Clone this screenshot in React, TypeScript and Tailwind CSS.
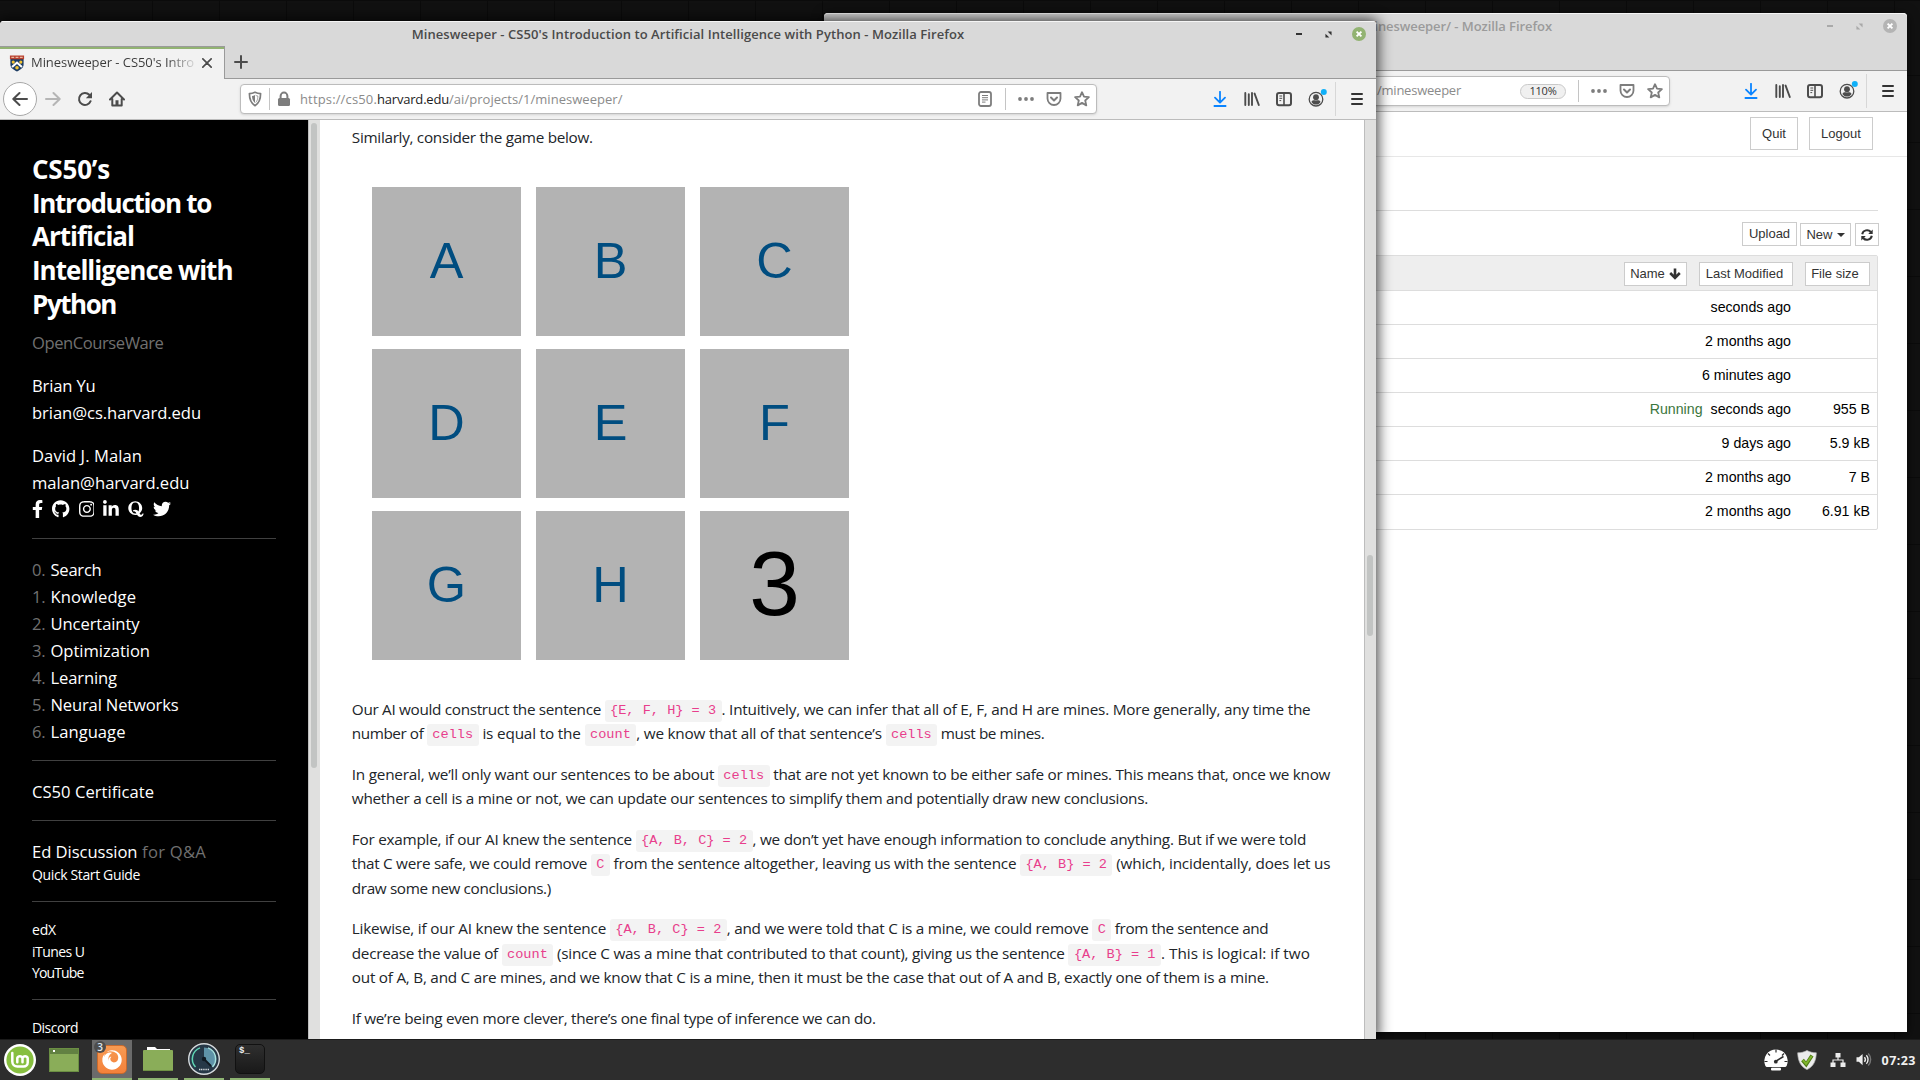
import React, { useLayoutEffect, useRef } from "react";
import {
  FaFacebookF,
  FaGithub,
  FaInstagram,
  FaLinkedinIn,
  FaQuora,
  FaTwitter,
  FaFirefox,
} from "react-icons/fa";

/* Text run justified to an exact width by spreading the difference between its letters. */
function Fit({ w, children, className = "" }: { w: number; children: string; className?: string }) {
  const ref = useRef<HTMLSpanElement>(null);
  useLayoutEffect(() => {
    const el = ref.current;
    if (!el) return;
    el.style.letterSpacing = "0px";
    const natural = el.getBoundingClientRect().width;
    el.style.letterSpacing = `${(w - natural) / children.length}px`;
  }, [w, children]);
  return (
    <span ref={ref} className={`inline-block whitespace-pre ${className}`}>
      {children}
    </span>
  );
}

function Code({ children }: { children: string }) {
  return (
    <code className="inline-block h-[22px] whitespace-pre rounded-[3px] bg-[#f3f3f3] px-[5.44px] font-['Liberation_Mono',monospace] text-[13.6px] leading-[22px] text-[#e83e8c]">
      {children}
    </code>
  );
}

type Part = [string, number] | string;

function Paragraph({ lines }: { lines: Part[][] }) {
  return (
    <div className="mb-4">
      {lines.map((line, i) => (
        <div key={i} className="flex h-[24.5px] items-center whitespace-pre leading-[24.5px]">
          {line.map((p, j) =>
            typeof p === "string" ? (
              <span key={j} className="pt-[3px] leading-none">
                <Code>{p}</Code>
              </span>
            ) : (
              <Fit key={j} w={p[1]}>
                {p[0]}
              </Fit>
            ),
          )}
        </div>
      ))}
    </div>
  );
}

const PARAGRAPHS: Part[][][] = [
  [
    [
      ["Our AI would construct the sentence ", 252.8],
      "{E, F, H} = 3",
      [". Intuitively, we can infer that all of E, F, and H are mines. More generally, any time the", 588.9],
    ],
    [
      ["number of ", 75.1],
      "cells",
      [" is equal to the ", 106],
      "count",
      [", we know that all of that sentence’s ", 249.3],
      "cells",
      [" must be mines.", 107.1],
    ],
  ],
  [
    [
      ["In general, we’ll only want our sentences to be about ", 366.1],
      "cells",
      [" that are not yet known to be either safe or mines. This means that, once we know", 560.6],
    ],
    [
      [
        "whether a cell is a mine or not, we can update our sentences to simplify them and potentially draw new conclusions.",
        796.2,
      ],
    ],
  ],
  [
    [
      ["For example, if our AI knew the sentence ", 283.8],
      "{A, B, C} = 2",
      [", we don’t yet have enough information to conclude anything. But if we were told", 553.5],
    ],
    [
      ["that C were safe, we could remove ", 239],
      "C",
      [" from the sentence altogether, leaving us with the sentence ", 410.1],
      "{A, B} = 2",
      [" (which, incidentally, does let us", 218],
    ],
    [["draw some new conclusions.)", 199.1]],
  ],
  [
    [
      ["Likewise, if our AI knew the sentence ", 258],
      "{A, B, C} = 2",
      [", and we were told that C is a mine, we could remove ", 365.5],
      "C",
      [" from the sentence and", 157],
    ],
    [
      ["decrease the value of ", 149.8],
      "count",
      [" (since C was a mine that contributed to that count), giving us the sentence ", 515.2],
      "{A, B} = 1",
      [". This is logical: if two", 149],
    ],
    [
      [
        "out of A, B, and C are mines, and we know that C is a mine, then it must be the case that out of A and B, exactly one of them is a mine.",
        917,
      ],
    ],
  ],
  [[["If we’re being even more clever, there’s one final type of inference we can do.", 523.9]]],
];

/* ---------- toolbar icons ---------- */

const box = "h-4 w-4 shrink-0";

const DownloadIcon = () => (
  <svg viewBox="0 0 16 16" className="h-4 w-4 text-[#0a84ff]" fill="none" stroke="currentColor" strokeWidth="1.8" strokeLinecap="round" strokeLinejoin="round">
    <path d="M8 .8v10M3 6.6l5 5 5-5M2.4 15h11.2" />
  </svg>
);
const LibraryIcon = () => (
  <svg viewBox="0 0 16 16" className={box} fill="none" stroke="currentColor" strokeWidth="1.9" strokeLinecap="round">
    <path d="M1.3 2v12M4.8 3.2V14M8 2v12M10.6 2.6l4.2 11.4" />
  </svg>
);
const SidebarIcon = () => (
  <svg viewBox="0 0 16 16" className={box} fill="none" stroke="currentColor">
    <rect x="1" y="2" width="14" height="12.2" rx="2" strokeWidth="2" />
    <path d="M8 2v12" strokeWidth="1.6" />
    <path d="M3.4 5h2.8M3.4 7.3h2.8M3.4 9.6h1.8" strokeWidth="1" />
  </svg>
);
const AccountIcon = () => (
  <svg viewBox="0 0 20 20" className="h-5 w-5 overflow-visible">
    <circle cx="10" cy="10.2" r="6.800" fill="none" stroke="currentColor" strokeWidth="1.3" />
    <circle cx="10" cy="8.2" r="2.9" fill="currentColor" />
    <path d="M5.400 13c1-2 2.600-1.600 4.600-1.600s3.600-.400 4.600 1.600a5.400 5.400 0 0 1-9.200 0z" fill="currentColor" />
    <circle cx="17.800" cy="3" r="3" fill="#10b0f8" />
  </svg>
);
const MenuIcon = () => (
  <svg viewBox="0 0 16 16" className={box} stroke="currentColor" strokeWidth="2" strokeLinecap="round">
    <path d="M3 3h10M3 8h10M3 13h10" />
  </svg>
);
const StarIcon = () => (
  <svg viewBox="0 0 16 16" className={box} fill="none" stroke="currentColor" strokeWidth="1.8" strokeLinejoin="round">
    <path d="M8 1.200l2 4.500 4.900.500-3.700 3.300 1.100 4.900L8 11.900l-4.300 2.500 1.100-4.900L1.100 6.200 6 5.700z" />
  </svg>
);
const PocketIcon = () => (
  <svg viewBox="0 0 16 16" className={box} fill="none" stroke="currentColor" strokeWidth="1.8" strokeLinecap="round" strokeLinejoin="round">
    <path d="M1.500 2h13v5.500a6.500 6.500 0 0 1-13 0z" />
    <path d="M5 6.500l3 3 3-3" strokeWidth="2" />
  </svg>
);
const DotsIcon = () => (
  <svg viewBox="0 0 16 16" className={box} fill="currentColor">
    <circle cx="2" cy="8" r="1.900" />
    <circle cx="8" cy="8" r="1.900" />
    <circle cx="14" cy="8" r="1.900" />
  </svg>
);
const ReaderIcon = () => (
  <svg viewBox="0 0 16 16" className={box} fill="none" stroke="currentColor">
    <rect x="2" y="1" width="12" height="14" rx="2" strokeWidth="1.800" />
    <path d="M5 4.500h6M5 6.700h6M5 8.900h6M5 11.100h3.500" strokeWidth="1" />
  </svg>
);
const ShieldIcon = () => (
  <svg viewBox="0 0 16 16" className={box}>
    <path d="M8 1.300c2 1 3.800 1.300 5.600 1.300 0 5.600-1 9.400-5.600 12.100C3.400 12 2.400 8.200 2.400 2.600 4.200 2.600 6 2.300 8 1.300z" fill="none" stroke="currentColor" strokeWidth="1.700" strokeLinejoin="round" />
    <path d="M8 4v8C6 10.300 5 8 5 5c1 0 2-.300 3-1z" fill="currentColor" />
    <path d="M8.600 4.200c.7.500 1.500.8 2.300.8 0 3-.700 5-2.300 6.600" fill="none" stroke="currentColor" strokeWidth=".7" />
  </svg>
);
const LockIcon = () => (
  <svg viewBox="0 0 16 16" className={box}>
    <rect x="2" y="7" width="12" height="8" rx="1.500" fill="currentColor" />
    <path d="M4.600 7.500V5a3.400 3.400 0 0 1 6.800 0v2.500" fill="none" stroke="currentColor" strokeWidth="2" />
  </svg>
);
const BackIcon = () => (
  <svg viewBox="0 0 16 16" className={box} fill="none" stroke="currentColor" strokeWidth="2" strokeLinecap="round" strokeLinejoin="round">
    <path d="M15 8H1.500M7.500 2L1.300 8l6.200 6" />
  </svg>
);
const ForwardIcon = () => (
  <svg viewBox="0 0 16 16" className={box} fill="none" stroke="currentColor" strokeWidth="2" strokeLinecap="round" strokeLinejoin="round">
    <path d="M1 8h13.500M8.500 2l6.200 6-6.200 6" />
  </svg>
);
const ReloadIcon = () => (
  <svg viewBox="0 0 16 16" className={box} fill="none" stroke="currentColor" strokeWidth="2" strokeLinecap="round">
    <path d="M13.600 10.200A6 6 0 1 1 12.300 3.800" />
    <path d="M15 1v6.200H8.800z" fill="currentColor" stroke="none" />
  </svg>
);
const HomeIcon = () => (
  <svg viewBox="0 0 16 16" className={box} fill="none" stroke="currentColor" strokeWidth="2" strokeLinecap="round" strokeLinejoin="round">
    <path d="M1 8.500L8 1.500l7 7M3.300 8v6.500h9.400V8" />
    <path d="M8 14V9.200" strokeWidth="3" strokeLinecap="butt" />
  </svg>
);

/* ---------- window chrome ---------- */

function WindowButtons({ active }: { active: boolean }) {
  return (
    <div className={`flex h-[24px] items-center pr-[10px] ${active ? "text-[#333]" : "text-[#a9a9a9]"}`}>
      <span className="mr-[19px] flex w-[14px] justify-center">
        <span className="h-[2px] w-[6px] bg-current" />
      </span>
      <svg viewBox="0 0 8 8" className="mr-[20px] h-[7px] w-[7px]" fill="currentColor">
        <path d="M3 .5h4.500V5zM.5 3L5 7.500H.5z" />
      </svg>
      <svg viewBox="0 0 14 14" className="h-[14px] w-[14px]">
        <circle cx="7" cy="7" r="7" fill={active ? "#92b372" : "#b4b4b4"} />
        <path d="M4.600 4.600l4.800 4.800M9.400 4.600L4.600 9.400" stroke="#fff" strokeWidth="1.900" />
      </svg>
    </div>
  );
}

function UrlActions({ reader }: { reader?: boolean }) {
  return (
    <div className="flex h-full items-center text-[#7d7d7d]">
      {reader && (
        <span className="mr-[12px]">
          <ReaderIcon />
        </span>
      )}
      <span className="mr-[6px] h-[22px] w-px bg-[#c4c4c4]" />
      <span className="flex w-7 justify-center">
        <DotsIcon />
      </span>
      <span className="flex w-7 justify-center">
        <PocketIcon />
      </span>
      <span className="flex w-7 justify-center">
        <StarIcon />
      </span>
    </div>
  );
}

function ToolbarEnd() {
  return (
    <div className="flex items-center text-[#4c4c4c]">
      <span className="flex w-8 justify-center">
        <DownloadIcon />
      </span>
      <span className="flex w-8 justify-center">
        <LibraryIcon />
      </span>
      <span className="flex w-8 justify-center">
        <SidebarIcon />
      </span>
      <span className="flex w-8 justify-center">
        <AccountIcon />
      </span>
      <span className="ml-[3px] h-[34px] w-px bg-[#d7d7d7]" />
      <span className="ml-[2px] flex w-[38px] justify-center text-[#333]">
        <MenuIcon />
      </span>
    </div>
  );
}

const btn =
  "flex items-center justify-center border border-[#ccc] bg-white text-[#333] whitespace-nowrap";

const FILES: [string, string, boolean][] = [
  ["seconds ago", "", false],
  ["2 months ago", "", false],
  ["6 minutes ago", "", false],
  ["seconds ago", "955 B", true],
  ["9 days ago", "5.9 kB", false],
  ["2 months ago", "7 B", false],
  ["2 months ago", "6.91 kB", false],
];

function JupyterWindow() {
  return (
    <div className="absolute left-[824px] top-[13px] flex h-[1019px] w-[1083px] flex-col rounded-t-[4px] bg-white shadow-[0_2px_12px_rgba(0,0,0,0.7)]">
      <div className="flex h-[57px] shrink-0 items-start justify-end rounded-t-[4px] border-t border-[#f5f5f5] bg-[#d9d9d9]">
        <div className="flex h-[26px] items-center pr-[271px] font-['Open_Sans',sans-serif] text-[13px] font-semibold text-[#9b9b9b]">
          <Fit w={190}>minesweeper/ - Mozilla Firefox</Fit>
        </div>
        <WindowButtons active={false} />
      </div>
      <div className="flex h-[42px] shrink-0 items-center justify-end border-y border-b-[#bcbcbc] border-t-[#9a9a9a] bg-[#f2f2f2]">
        <div className="mr-[65px] flex h-[30px] w-[500px] items-center justify-end rounded-[4px] border border-[#bcbcbc] bg-white shadow-sm">
          <span className="mr-[59px] font-['Open_Sans',sans-serif] text-[13px] text-[#8b8b8b]">
            <Fit w={84}>/minesweeper</Fit>
          </span>
          <span className="mr-[12px] flex h-[15px] w-[46px] items-center justify-center rounded-full border border-[#c9c9c9] bg-[#f0f0f0] font-['Open_Sans',sans-serif] text-[11px] text-[#333]">
            <Fit w={27}>110%</Fit>
          </span>
          <UrlActions />
        </div>
        <ToolbarEnd />
      </div>
      <div className="flex min-h-0 flex-1 flex-col font-['Liberation_Sans',Arial,sans-serif] text-[13px]">
        <div className="flex h-[45px] shrink-0 items-start justify-end border-b border-[#e7e7e7] pr-[34px] pt-[5px]">
          <div className={`${btn} mr-[11px] h-[33px] w-[48px]`}>Quit</div>
          <div className={`${btn} h-[33px] w-[64px]`}>Logout</div>
        </div>
        <div className="mr-[29px] h-[54px] shrink-0 border-b border-[#ddd]" />
        <div className="mr-[28px] mt-[11px] flex h-[24px] shrink-0 items-end justify-end">
          <div className={`${btn} mr-[3px] h-[24px] w-[55px]`}>Upload</div>
          <div className={`${btn} mr-[4px] h-[23px] w-[51px]`}>
            New
            <span className="ml-[4px] border-x-4 border-t-4 border-x-transparent border-t-[#333]" />
          </div>
          <div className={`${btn} h-[23px] w-[24px]`}>
            <svg viewBox="0 0 12 12" className="h-3 w-3" fill="none" stroke="#333" strokeWidth="2">
              <path d="M1.200 5.200A4.900 4.900 0 0 1 9.800 3M10.800 6.800A4.900 4.900 0 0 1 2.200 9" />
              <path d="M11.700.5v4.600H7.200zM.3 11.500V6.900h4.500z" fill="#333" stroke="none" />
            </svg>
          </div>
        </div>
        <div className="mr-[29px] mt-[9px] shrink-0 rounded-[2px] border border-[#ddd]">
          <div className="flex h-[35px] items-center justify-end border-b border-[#ddd] bg-[#eee] pr-[7px] pt-[2px]">
            <div className={`${btn} mr-[12px] h-[24px] w-[63px] gap-[4px]`}>
              Name
              <svg viewBox="0 0 12 12" className="h-3 w-3" fill="none" stroke="#333" strokeWidth="2.600">
                <path d="M6 .5v9M1.200 5L6 9.800 10.800 5" />
              </svg>
            </div>
            <div className={`${btn} mr-[12px] h-[24px] w-[94px] pr-[3px]`}>Last Modified</div>
            <div className={`${btn} h-[24px] w-[65px] pr-[5px]`}>File size</div>
          </div>
          {FILES.map(([time, size, running], i) => (
            <div
              key={i}
              className="flex h-[34px] items-center justify-end border-b border-[#ddd] pr-[7px] text-[14.200px] text-black last:border-b-0"
            >
              {running && <span className="mr-[8px] text-[#3c763d]">Running</span>}
              <span className={running ? "pt-[1px]" : ""}>{time}</span>
              <span className={`w-[79px] text-right ${running ? "pt-[1px]" : ""}`}>{size}</span>
            </div>
          ))}
        </div>
      </div>
    </div>
  );
}

/* ---------- course sidebar ---------- */

const Rule = ({ className }: { className: string }) => (
  <div className={`h-px w-[244px] shrink-0 bg-[#404040] ${className}`} />
);

const HEADING: [string, number][] = [
  ["CS50’s", 78],
  ["Introduction to", 179],
  ["Artificial", 102],
  ["Intelligence with", 200.5],
  ["Python", 84],
];

const LECTURES: [string, number][] = [
  ["Search", 51],
  ["Knowledge", 85.5],
  ["Uncertainty", 89],
  ["Optimization", 99.5],
  ["Learning", 66.5],
  ["Neural Networks", 128],
  ["Language", 75],
];

function CourseSidebar() {
  return (
    <div className="flex w-[308px] shrink-0 flex-col overflow-hidden bg-black pl-[32px] pt-[33px] text-[16.600px] leading-[27px] text-white [font-stretch:97%]">
      <div className="shrink-0 text-[26px] font-bold leading-[33.700px] [font-stretch:90%]">
        {HEADING.map(([t, w]) => (
          <div key={t}>
            <Fit w={w}>{t}</Fit>
          </div>
        ))}
      </div>
      <div className="mt-[7px] h-[27px] shrink-0 text-[#707070]">
        <Fit w={131.500}>OpenCourseWare</Fit>
      </div>
      <div className="mt-[16px] h-[27px] shrink-0">
        <Fit w={63.500}>Brian Yu</Fit>
      </div>
      <div className="h-[27px] shrink-0">
        <Fit w={169}>brian@cs.harvard.edu</Fit>
      </div>
      <div className="mt-[16px] h-[27px] shrink-0">
        <Fit w={110}>David J. Malan</Fit>
      </div>
      <div className="h-[27px] shrink-0">
        <Fit w={157.500}>malan@harvard.edu</Fit>
      </div>
      <div className="flex h-[26px] shrink-0 items-center gap-[9px]">
        <FaFacebookF className="h-[18px] w-[11.200px]" />
        <FaGithub className="h-[18px] w-[17.400px]" />
        <FaInstagram className="h-[18px] w-[15.800px]" />
        <FaLinkedinIn className="h-[18px] w-[15.800px]" />
        <FaQuora className="h-[18px] w-[15.800px]" />
        <FaTwitter className="h-[18px] w-[18px]" />
      </div>
      <Rule className="mb-[17px] mt-[16px]" />
      <div className="shrink-0">
        {LECTURES.map(([t, w], i) => (
          <div key={t} className="flex h-[27px]">
            <span className="w-[18.500px] text-[#707070]">
              <Fit w={13.500}>{`${i}.`}</Fit>
            </span>
            <Fit w={w}>{t}</Fit>
          </div>
        ))}
      </div>
      <Rule className="mb-[17px] mt-[15px]" />
      <div className="h-[27px] shrink-0">
        <Fit w={122}>CS50 Certificate</Fit>
      </div>
      <Rule className="mb-[17px] mt-[15px]" />
      <div className="h-[26px] shrink-0">
        <Fit w={105.500}>Ed Discussion</Fit>
        <Fit w={68.500} className="text-[#707070]">
          {" for Q&A"}
        </Fit>
      </div>
      <div className="shrink-0 text-[14px] leading-[21.500px] [font-stretch:93%]">
        <Fit w={108}>Quick Start Guide</Fit>
      </div>
      <Rule className="mb-[17px] mt-[16px]" />
      <div className="flex shrink-0 flex-col items-start text-[14px] leading-[21.500px] [font-stretch:93%]">
        <Fit w={24}>edX</Fit>
        <Fit w={52.500}>iTunes U</Fit>
        <Fit w={51.500}>YouTube</Fit>
      </div>
      <Rule className="mb-[17px] mt-[15px]" />
      <div className="shrink-0 text-[14px] leading-[21.500px] [font-stretch:93%]">
        <Fit w={46}>Discord</Fit>
      </div>
    </div>
  );
}

function Crest() {
  return (
    <svg viewBox="0 0 16 18" className="h-[17px] w-[16px]">
      <path d="M1 1h14v9c0 4-4 5.500-7 7.500C5 15.500 1 14 1 10z" fill="#1d3c63" />
      <path d="M.5.500h15v4H.5z" fill="#b8402f" />
      <path d="M2 2.500h3M6.500 2.500h3M11 2.500h3" stroke="#e8b8a0" strokeWidth="1.200" />
      <path d="M2 12l6-5.500 6 5.500-1.500 1.500L8 9.500l-4.500 4z" fill="#fff" />
      <circle cx="4" cy="7.500" r="1.700" fill="#f2c230" />
      <circle cx="12" cy="7.500" r="1.700" fill="#f2c230" />
      <circle cx="8" cy="13.500" r="1.900" fill="#f2c230" />
    </svg>
  );
}

const CELLS = ["A", "B", "C", "D", "E", "F", "G", "H", "3"];

function CourseWindow() {
  return (
    <div className="absolute left-0 top-[21px] h-[1018px] w-[1376px] rounded-tr-[4px] shadow-[0_0_14px_2px_rgba(0,0,0,0.750)]">
      <div className="flex h-full w-full flex-col overflow-hidden rounded-t-[4px] bg-white font-['Open_Sans',sans-serif]">
        <div className="grid h-[25px] shrink-0 grid-cols-[1fr_auto_1fr] items-start border-t border-[#f5f5f5] bg-[#d9d9d9]">
          <span />
          <span className="text-[13px] font-semibold leading-[25px] text-[#4a4a4a]">
            <Fit w={552.500}>Minesweeper - CS50's Introduction to Artificial Intelligence with Python - Mozilla Firefox</Fit>
          </span>
          <div className="flex justify-end">
            <WindowButtons active />
          </div>
        </div>
        <div className="flex h-[33px] shrink-0 bg-[#d9d9d9]">
          <div className="flex h-full w-[225px] items-center border-r border-t border-[#9a9a9a] bg-[#f2f2f2] shadow-[inset_0_2px_0_#92b372]">
            <span className="ml-[9px] mr-[6px]">
              <Crest />
            </span>
            <span className="w-[165px] overflow-hidden whitespace-nowrap bg-[linear-gradient(90deg,#3a3a3a_82%,transparent_102%)] bg-clip-text text-[13px] text-transparent">
              <Fit w={163}>Minesweeper - CS50's Intro</Fit>
            </span>
            <svg viewBox="0 0 12 12" className="ml-[6px] h-[10px] w-[10px]" stroke="#4c4c4c" strokeWidth="2" strokeLinecap="round">
              <path d="M1 1l10 10M11 1L1 11" />
            </svg>
          </div>
          <div className="flex flex-1 items-center border-b border-[#9a9a9a] pl-[9px]">
            <svg viewBox="0 0 14 14" className="h-[14px] w-[14px]" stroke="#4c4c4c" strokeWidth="2" strokeLinecap="round">
              <path d="M7 1v12M1 7h12" />
            </svg>
          </div>
        </div>
        <div className="flex h-[41px] shrink-0 items-center border-b border-[#bcbcbc] bg-[#f2f2f2] text-[#4c4c4c]">
          <span className="ml-[3px] flex h-[34px] w-[34px] items-center justify-center rounded-full border border-[#a8a8a8] bg-white">
            <BackIcon />
          </span>
          <span className="ml-[8px] text-[#b5b5b5]">
            <ForwardIcon />
          </span>
          <span className="ml-[16px]">
            <ReloadIcon />
          </span>
          <span className="ml-[16px]">
            <HomeIcon />
          </span>
          <div className="ml-[115px] flex h-[30px] w-[857px] items-center rounded-[4px] border border-[#bcbcbc] bg-white shadow-sm">
            <span className="ml-[6px] text-[#7d7d7d]">
              <ShieldIcon />
            </span>
            <span className="ml-[6px] h-[22px] w-px bg-[#c4c4c4]" />
            <span className="ml-[6px] text-[#7d7d7d]">
              <LockIcon />
            </span>
            <span className="ml-[8px] flex flex-1 whitespace-nowrap pt-[1px] text-[13px] text-[#8b8b8b]">
              <Fit w={77}>https://cs50.</Fit>
              <Fit w={72} className="text-[#1c1c1c]">
                harvard.edu
              </Fit>
              <Fit w={173.500}>/ai/projects/1/minesweeper/</Fit>
            </span>
            <UrlActions reader />
          </div>
          <div className="ml-auto">
            <ToolbarEnd />
          </div>
        </div>
        <div className="flex min-h-0 flex-1">
          <CourseSidebar />
          <div className="w-[12px] shrink-0 border-l border-[#bdbdbd] bg-[#e0e0df] pl-[2px] pt-[3px]">
            <div className="h-[645px] w-[6px] rounded-full bg-[#c2c4c3]" />
          </div>
          <div className="min-w-0 flex-1 overflow-hidden pl-[31.800px] pt-[4.800px] text-[15.300px] leading-[24.500px] text-[#212529] [font-stretch:97%]">
            <div className="h-[24.500px]">
              <Fit w={241}>Similarly, consider the game below.</Fit>
            </div>
            <div className="ml-[20.200px] mt-[37.700px] grid grid-cols-[149px_149px_149px] gap-x-[15px] gap-y-[13px]">
              {CELLS.map((c) => (
                <div
                  key={c}
                  className={`h-[149px] bg-[#b3b3b3] text-center font-['Liberation_Sans',Arial,sans-serif] ${
                    c === "3" ? "text-[91px] leading-[146px] text-black" : "text-[50.500px] leading-[147px] text-[#004d80]"
                  }`}
                >
                  {c}
                </div>
              ))}
            </div>
            <div className="pt-[37px]">
              {PARAGRAPHS.map((lines, i) => (
                <Paragraph key={i} lines={lines} />
              ))}
            </div>
          </div>
          <div className="w-[12px] shrink-0 border-l border-[#bdbdbd] bg-[#e0e0df] pl-[2px] pt-[435px]">
            <div className="h-[81px] w-[6px] rounded-full bg-[#c2c4c3]" />
          </div>
        </div>
      </div>
    </div>
  );
}

/* ---------- panel ---------- */

function Slot({ children, running, active }: { children: React.ReactNode; running?: boolean; active?: boolean }) {
  return (
    <div
      className={`relative mr-[6px] flex h-[40px] w-[40px] shrink-0 items-center justify-center pb-[2px] ${
        active ? "bg-[#6b6b6b]" : ""
      } ${running ? "shadow-[inset_0_-2px_0_#8fb573]" : ""}`}
    >
      {children}
    </div>
  );
}

function Panel() {
  return (
    <div className="absolute bottom-0 left-0 flex h-[41px] w-full items-start border-t border-[#1b1b1b] bg-[#2d2d2d]">
      <Slot>
        <svg viewBox="0 0 32 32" className="mt-[2px] h-8 w-8">
          <circle cx="16" cy="16" r="16" fill="#fff" />
          <circle cx="16" cy="16" r="13.600" fill="#87bf40" />
          <path
            d="M8.300 9v8.500a5 5 0 0 0 5 5h6.400a4 4 0 0 0 4-4v-4.300a2.700 2.700 0 0 0-5.200 0v4M18.500 18.200v-4a2.700 2.700 0 0 0-5.200 0v4"
            fill="none"
            stroke="#fff"
            strokeWidth="2.500"
            strokeLinecap="round"
          />
        </svg>
      </Slot>
      <Slot>
        <div className="ml-[-4px] mt-[2px] h-[24px] w-[30px] border border-[#6b8f43] bg-[#8aad59]">
          <div className="h-[5px] bg-[#628142] pl-[3px] pt-[1px]">
            <div className="h-[2px] w-[2px] bg-white" />
          </div>
        </div>
      </Slot>
      <Slot running active>
        <div className="mt-[1px] flex h-[29px] w-[30px] items-center justify-center rounded-[5px] border border-[#c96a2c] bg-linear-to-b from-[#f79a52] to-[#f4813a]">
          <FaFirefox className="h-[20px] w-[20px] text-white" />
        </div>
        <span className="absolute left-[2px] top-[1px] flex h-[12px] w-[12px] items-center justify-center rounded-full bg-[#4d4d4d] font-['Open_Sans',sans-serif] text-[10px] font-semibold text-[#dfe8f0]">
          3
        </span>
      </Slot>
      <Slot running>
        <svg viewBox="0 0 30 26" className="h-[26px] w-[30px]">
          <path d="M4 1h8l2 2h13v6H4z" fill="#fff" />
          <rect x="0" y="4" width="30" height="21" rx="1" fill="#8aad59" />
          <path d="M.5 24.500h29" stroke="#6f9244" />
        </svg>
      </Slot>
      <Slot running>
        <svg viewBox="0 0 32 32" className="h-8 w-8">
          <circle cx="16" cy="16" r="15.300" fill="#263847" stroke="#d5dadd" strokeWidth="1.400" />
          <path d="M16 16V4.500A11.500 11.500 0 0 1 24.500 23.500z" fill="#5f93a8" />
          <path d="M7.500 24A11.800 11.800 0 0 1 12 4.900" fill="none" stroke="#5fd6b4" strokeWidth="1.500" />
          <path d="M20 4.900A11.800 11.800 0 0 1 24.500 24" fill="none" stroke="#a8e3e0" strokeWidth="1.500" />
          <path d="M16 16l7 7" stroke="#101a22" strokeWidth="1.800" />
          <circle cx="16" cy="16" r="2.200" fill="#101a22" />
          <path d="M11 26.500h10" stroke="#d5dadd" strokeWidth="1.600" strokeDasharray="1.200 .6" />
        </svg>
      </Slot>
      <Slot running>
        <div className="h-[30px] w-[30px] rounded-[5px] border border-[#111] bg-linear-to-b from-[#2f2f2f] to-[#191919] pl-[3px] pt-[1px] font-['Liberation_Mono',monospace] text-[9px] font-bold leading-[11px] text-[#eee]">
          $_
        </div>
      </Slot>
      <div className="ml-auto flex h-[40px] items-center pr-[4px]">
        <svg viewBox="0 0 24 22" className="mr-[9px] h-[22px] w-[24px]">
          <path d="M12 .5A11.600 11.600 0 0 0 1.200 16.500c.5 1 1.300 1.500 2.300 1.500h17c1 0 1.800-.5 2.300-1.500A11.600 11.600 0 0 0 12 .5z" fill="#fff" />
          <path d="M12 .5v3M4 4.500l2 2M20 4.500l-2 2M.5 12.500h3M23.500 12.500h-3" stroke="#2d2d2d" strokeWidth="1.200" />
          <path d="M11.500 12.500l8-5" stroke="#2d2d2d" strokeWidth="1.500" />
          <circle cx="11.800" cy="12.700" r="1.900" fill="#2d2d2d" />
          <rect x="7" y="18.800" width="10" height="2.600" rx="1" fill="#fff" />
        </svg>
        <svg viewBox="0 0 20 20" className="mr-[13px] h-[20px] w-[20px]">
          <path d="M10 .5c3 1.700 6 2.300 9.300 2.300C19 11 16.500 16.500 10 19.600 3.500 16.500 1 11 .7 2.800 4 2.800 7 2.200 10 .5z" fill="#ececec" stroke="#bbb" strokeWidth=".7" />
          <path d="M5.500 10l3.700 4.500L15 5.500" fill="none" stroke="#4f7a17" strokeWidth="3.600" />
          <path d="M5.800 10.200l3.300 3.800 5.600-8" fill="none" stroke="#7fb52d" strokeWidth="2" />
        </svg>
        <svg viewBox="0 0 16 16" className="mr-[10px] h-4 w-4" fill="#ececec">
          <path d="M5.500 1h5v4.500h-5zM.5 10.500h5V15h-5zM10.500 10.500h5V15h-5z" />
          <path d="M8 5v3M3 11V8h10v3" fill="none" stroke="#ececec" strokeWidth="1.200" />
        </svg>
        <svg viewBox="0 0 16 16" className="mr-[10px] h-4 w-4 pb-[1px]" fill="none" strokeWidth="1.500">
          <path d="M0 5.500h2.500L6.500 2v12L2.500 10.500H0z" fill="#ececec" />
          <path d="M8.500 5.500a4 4 0 0 1 0 5M10.500 3.500a6.500 6.500 0 0 1 0 9" stroke="#ececec" />
          <path d="M12.500 1.500a9.500 9.500 0 0 1 0 13" stroke="#777" />
        </svg>
        <span className="pt-[2px] font-['Noto_Sans',sans-serif] text-[12.500px] font-bold text-[#f0f0f0]">
          <Fit w={34.500}>07:23</Fit>
        </span>
      </div>
    </div>
  );
}

export default function App() {
  return (
    <div className="relative h-[1080px] w-[1920px] overflow-hidden bg-[#111] bg-[repeating-linear-gradient(90deg,transparent_0_66px,#0b0b0b_66px_67px),repeating-linear-gradient(180deg,transparent_0_66px,#0b0b0b_66px_67px)] bg-position-[19px_9px]">
      <JupyterWindow />
      <CourseWindow />
      <Panel />
    </div>
  );
}
